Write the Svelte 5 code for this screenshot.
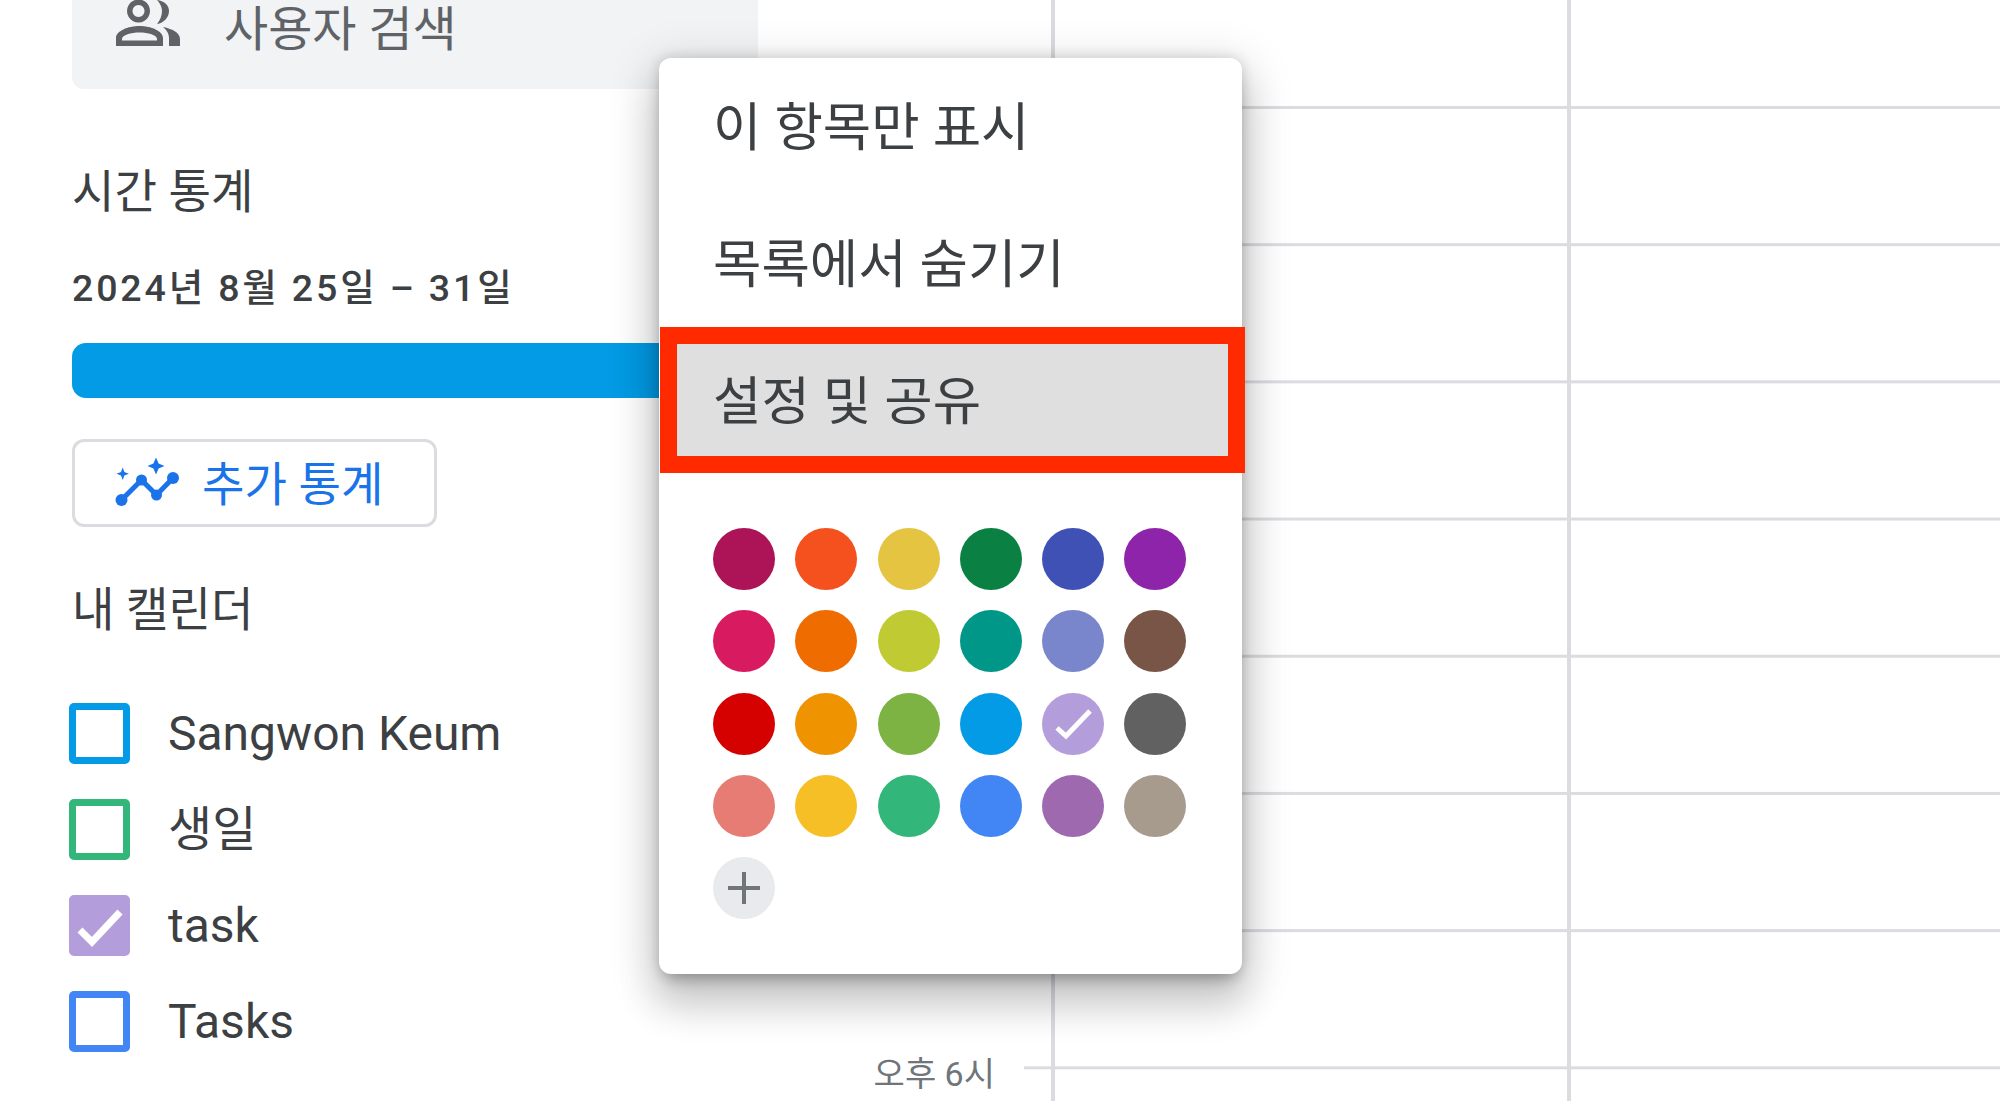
<script>
	const calendars = [
		{ name: 'Sangwon Keum', color: '#039be5', checked: false },
		{ name: '생일', color: '#33b679', checked: false, hangul: true },
		{ name: 'task', color: '#b39ddb', checked: true },
		{ name: 'Tasks', color: '#4285f4', checked: false },
	];

	const swatches = [
		'#ad1457', '#f4511e', '#e4c441', '#0b8043', '#3f51b5', '#8e24aa',
		'#d81b60', '#ef6c00', '#c0ca33', '#009688', '#7986cb', '#795548',
		'#d50000', '#f09300', '#7cb342', '#039be5', '#b39ddb', '#616161',
		'#e67c73', '#f6bf26', '#33b679', '#4285f4', '#9e69af', '#a79b8e',
	];
	const selected = '#b39ddb';
</script>

<div class="page">
	<aside class="sidebar">
		<div class="search">
			<svg class="people" viewBox="115 -1 66 46" aria-hidden="true">
				<path fill-rule="evenodd" d="M138.5 -1.5a11.5 11.5 0 1 0 .01 0zM138.5 4a6 6 0 1 1-.01 0z" />
				<path fill-rule="evenodd" d="M116 45V37C116 30 128 25 139.5 25S163 30 163 37V45ZM122 39.5H157V38C157 34 148 31.5 139.5 31.5S122 34 122 38Z" />
				<path d="M157-1C165 0 169 5 169 10 169 16 164 22 157 23 160 19 162 15 162 10 162 6 160 2 157-1Z" />
				<path d="M163 26C173 28 180 32 180 38V45H169V37C169 33 167 29 163 26Z" />
			</svg>
			<span>사용자 검색</span>
		</div>

		<h2 class="time-title">시간 통계</h2>
		<div class="range">2024년 8월 25일 – 31일</div>
		<div class="bar"></div>

		<button class="more">
			<svg viewBox="114 460 66 52" aria-hidden="true">
				<polyline points="121.5,503 141.5,483 156.5,498 173,481" />
				<circle cx="121.5" cy="503" r="6" />
				<circle cx="141.5" cy="483" r="5.5" />
				<circle cx="156.5" cy="498" r="5.5" />
				<circle cx="173" cy="481" r="6" />
				<path class="spark" d="M156 460.5l2.6 5.9 5.9 2.6-5.9 2.6-2.6 5.9-2.6-5.9-5.9-2.6 5.9-2.6z" />
				<path class="spark" d="M122.7 470.5l1.7 4.5 4.5 1.7-4.5 1.7-1.7 4.5-1.7-4.5-4.5-1.7 4.5-1.7z" />
			</svg>
			추가 통계
		</button>

		<h2 class="cal-title">내 캘린더</h2>
		<ul>
			{#each calendars as cal}
				<li>
					<span class="box" style:border-color={cal.color} style:background={cal.checked ? cal.color : 'transparent'}>
						{#if cal.checked}
							<svg viewBox="0 0 61 61" aria-hidden="true"><polyline points="11,35 23,47 51,17" /></svg>
						{/if}
					</span>
					<span class:hangul={cal.hangul}>{cal.name}</span>
				</li>
			{/each}
		</ul>
	</aside>

	<div class="gutter"><span>오후 6시</span></div>
	<div class="grid"></div>

	<div class="menu">
		<div class="item">이 항목만 표시</div>
		<div class="item">목록에서 숨기기</div>
		<div class="item active">설정 및 공유</div>
		<div class="swatches">
			{#each swatches as color}
				<span class="swatch" style:background={color}>
					{#if color === selected}
						<svg viewBox="0 0 62 62" aria-hidden="true"><polyline points="15,35 24,43 48,18" /></svg>
					{/if}
				</span>
			{/each}
			<span class="swatch add">
				<svg viewBox="0 0 62 62" aria-hidden="true"><path d="M31 15V47M15 31H47" /></svg>
			</span>
		</div>
	</div>
</div>

<style>
	:global(body) {
		background: #fff;
	}

	.page {
		position: relative;
		display: flex;
		width: 2000px;
		height: 1101px;
		overflow: hidden;
		font-family: Roboto, 'Noto Sans CJK KR', sans-serif;
		color: #3c4043;
	}

	.sidebar {
		flex: none;
		box-sizing: border-box;
		width: 800px;
		padding-left: 72px;
	}

	.search {
		display: flex;
		box-sizing: border-box;
		width: 686px;
		height: 89px;
		padding-left: 43px;
		background: #f1f3f4;
		border-radius: 0 0 12px 12px;
		overflow: hidden;
		color: #5f6368;
		font-size: 48px;
		line-height: 60px;
	}

	.people {
		flex: none;
		width: 66px;
		height: 46px;
		margin-right: 43px;
		fill: #5f6368;
	}

	h2 {
		margin: 0;
		font-size: 46.2px;
		font-weight: 400;
		line-height: 60px;
	}

	.time-title {
		margin-top: 73px;
	}

	.range {
		margin-top: 41px;
		font-size: 37.5px;
		font-weight: 500;
		line-height: 50px;
		letter-spacing: 2.85px;
	}

	.bar {
		width: 686px;
		height: 55px;
		margin-top: 30px;
		background: #039be5;
		border-radius: 14px 0 0 14px;
	}

	.more {
		display: flex;
		align-items: center;
		box-sizing: border-box;
		width: 365px;
		height: 88px;
		margin-top: 41px;
		padding: 0 0 6px 39px;
		background: #fff;
		border: 3px solid #dadce0;
		border-radius: 12px;
		color: #1a73e8;
		font: inherit;
		font-size: 46.2px;
	}

	.more svg {
		flex: none;
		width: 66px;
		height: 52px;
		margin: 6px 22px 0 0;
	}

	.more polyline {
		fill: none;
		stroke: #1a73e8;
		stroke-width: 5;
	}

	.more circle,
	.spark {
		fill: #1a73e8;
	}

	.cal-title {
		margin-top: 53px;
	}

	ul {
		display: flex;
		flex-direction: column;
		gap: 35px;
		margin: 63px 0 0 -3px;
		padding: 0;
		list-style: none;
	}

	li {
		display: flex;
		align-items: center;
		gap: 38px;
		height: 61px;
		font-size: 48px;
	}

	.hangul {
		margin-bottom: 9px;
	}

	.box {
		flex: none;
		position: relative;
		box-sizing: border-box;
		width: 61px;
		height: 61px;
		border: 7px solid;
		border-radius: 5px;
	}

	.box svg {
		position: absolute;
		inset: -7px;
		width: 61px;
		height: 61px;
	}

	.box polyline,
	.swatch polyline {
		fill: none;
		stroke: #fff;
		stroke-width: 7;
	}

	.gutter {
		flex: none;
		display: flex;
		align-items: flex-end;
		justify-content: flex-end;
		box-sizing: border-box;
		width: 224px;
		padding: 0 29px 3px 0;
		color: #70757a;
		font-size: 34px;
		line-height: 48px;
	}

	.grid {
		flex: 1;
		background-image:
			linear-gradient(90deg, #dadce0 4px, transparent 4px),
			linear-gradient(#dadce0 3px, transparent 3px);
		background-size: 516px 100%, 100% 137.2px;
		background-position: 27px 0, 0 106px;
	}

	.menu {
		position: absolute;
		top: 58px;
		left: 659px;
		box-sizing: border-box;
		width: 583px;
		height: 916px;
		background: #fff;
		border-radius: 12px;
		box-shadow:
			0 30px 38px 4px rgba(0, 0, 0, 0.14),
			0 11px 46px 10px rgba(0, 0, 0, 0.12),
			0 13px 15px -7px rgba(0, 0, 0, 0.2),
			0 0 14px rgba(0, 0, 0, 0.16);
		font-size: 52.6px;
	}

	.item {
		display: flex;
		align-items: center;
		box-sizing: border-box;
		height: 137px;
		padding: 0 0 7px 54px;
		color: #3c4043;
	}

	.item.active {
		width: 585px;
		height: 146px;
		margin: -5px 0 0 1px;
		padding: 0 0 7px 36px;
		background: #dfdfdf;
		border: 17px solid #ff2a00;
	}

	.swatches {
		display: grid;
		grid-template-columns: repeat(6, 62px);
		gap: 20.3px;
		margin: 55px 0 0 54px;
	}

	.swatch {
		display: block;
		width: 62px;
		height: 62px;
		border-radius: 50%;
	}

	.swatch svg {
		display: block;
	}

	.swatch polyline {
		stroke-width: 5;
	}

	.add {
		background: #e8eaed;
	}

	.add path {
		fill: none;
		stroke: #70757a;
		stroke-width: 4;
	}
</style>
